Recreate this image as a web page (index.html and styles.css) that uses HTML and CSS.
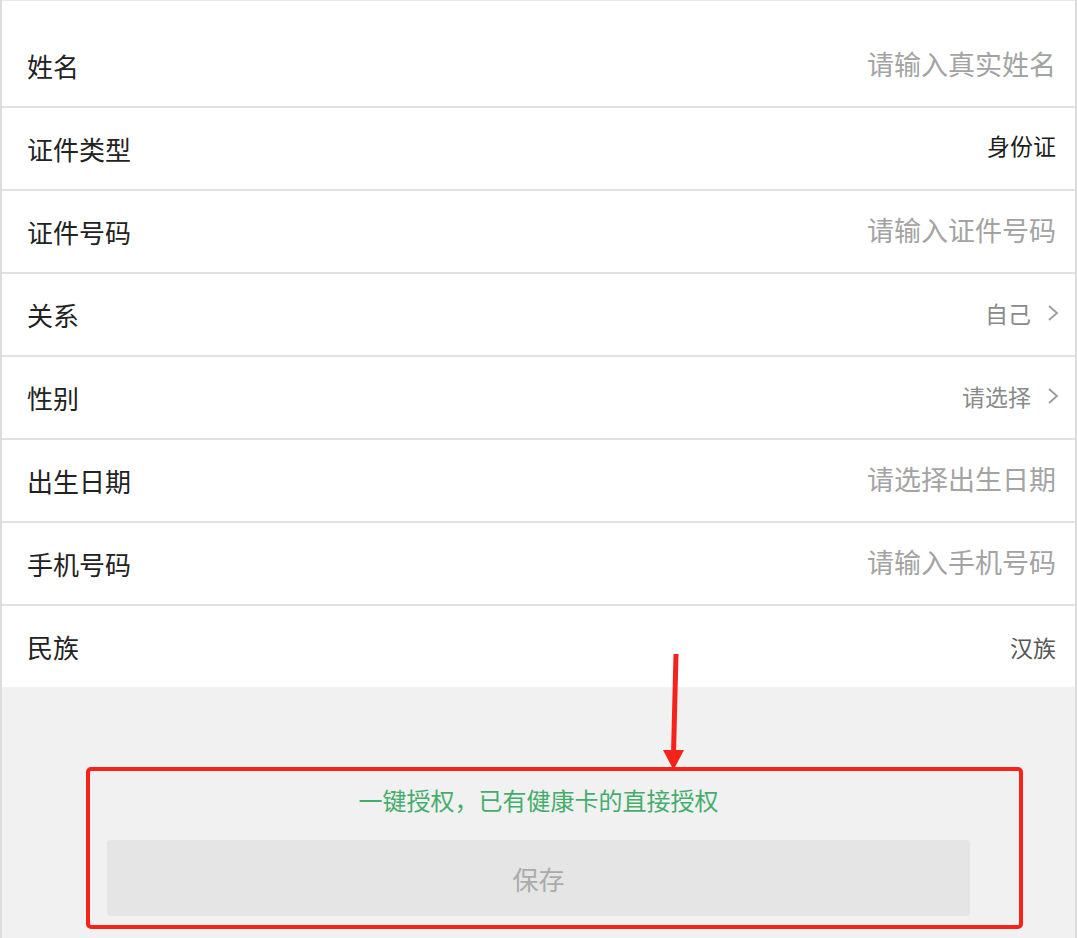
FILE: index.html
```html
<!DOCTYPE html>
<html lang="zh">
<head>
<meta charset="utf-8">
<title>添加就诊人</title>
<link rel="stylesheet" href="styles.css">
</head>
<body>
<div class="page">
  <div class="form">
    <div class="row"><span class="label">姓名</span><span class="ph">请输入真实姓名</span></div>
    <div class="row"><span class="label">证件类型</span><span class="val dark">身份证</span></div>
    <div class="row"><span class="label">证件号码</span><span class="ph">请输入证件号码</span></div>
    <div class="row"><span class="label">关系</span><span class="val">自己<svg class="chev" viewBox="0 0 12 20" width="12" height="20"><polyline points="2,3 10,10 2,17" fill="none" stroke="#9a9a9a" stroke-width="1.8"/></svg></span></div>
    <div class="row"><span class="label">性别</span><span class="val">请选择<svg class="chev" viewBox="0 0 12 20" width="12" height="20"><polyline points="2,3 10,10 2,17" fill="none" stroke="#9a9a9a" stroke-width="1.8"/></svg></span></div>
    <div class="row"><span class="label">出生日期</span><span class="ph">请选择出生日期</span></div>
    <div class="row"><span class="label">手机号码</span><span class="ph">请输入手机号码</span></div>
    <div class="row last"><span class="label">民族</span><span class="val mid">汉族</span></div>
  </div>
  <div class="footer">
    <p class="auth">一键授权，已有健康卡的直接授权</p>
    <button class="save" type="button">保存</button>
  </div>
  <div class="annot-box"></div>
  <svg class="annot-arrow" width="40" height="120" viewBox="0 0 40 120">
    <polygon points="17.5,0 22.5,0 20,100 15,100" fill="#f5231a"/>
    <polygon points="7,96 28,96 17.5,116" fill="#f5231a"/>
  </svg>
</div>
</body>
</html>
```
FILE: styles.css
```css
html, body {
  margin: 0;
  padding: 0;
}
body {
  background: #f1f1f1;
  font-family: "Noto Sans CJK SC", "Noto Sans", sans-serif;
}
.page {
  position: relative;
  width: 1077px;
  height: 938px;
  box-sizing: border-box;
  border-left: 2px solid #dcdcdc;
  border-right: 2px solid #dcdcdc;
  background: #f1f1f1;
}
.form {
  background: #fff;
  padding-top: 24px;
  border-top: 1px solid #e8e8e8;
}
.row {
  height: 83px;
  box-sizing: border-box;
  border-bottom: 2px solid #e2e2e2;
  display: flex;
  align-items: center;
  justify-content: space-between;
  padding: 0 19px 0 25px;
}
.row.last {
  height: 81px;
  border-bottom: none;
}
.label {
  font-size: 26px;
  color: #222;
}
.ph {
  font-size: 27px;
  color: #a3a3a3;
  margin-top: -4px;
}
.val {
  font-size: 23px;
  color: #8a8a8a;
  display: flex;
  align-items: center;
  margin-top: -4px;
}
.val.dark {
  color: #1c1c1c;
  margin-top: -8px;
}
.val.mid {
  color: #555;
  font-size: 23px;
  margin-top: 0;
}
.chev {
  margin-left: 16px;
  margin-right: -3px;
}
.footer {
  padding-top: 98px;
  display: flex;
  flex-direction: column;
  align-items: center;
}
.auth {
  margin: 0;
  font-size: 24px;
  line-height: 30px;
  color: #45ad6c;
}
.save {
  margin-top: 25px;
  width: 863px;
  height: 76px;
  border: none;
  border-radius: 4px;
  background: #e5e5e5;
  color: #ababab;
  font-family: "Noto Sans CJK SC", "Noto Sans", sans-serif;
  font-size: 26px;
}
.annot-box {
  position: absolute;
  left: 84px;
  top: 767px;
  width: 937px;
  height: 162px;
  box-sizing: border-box;
  border: 4px solid #f5231a;
  border-radius: 5px;
}
.annot-arrow {
  position: absolute;
  left: 654px;
  top: 654px;
}
```
